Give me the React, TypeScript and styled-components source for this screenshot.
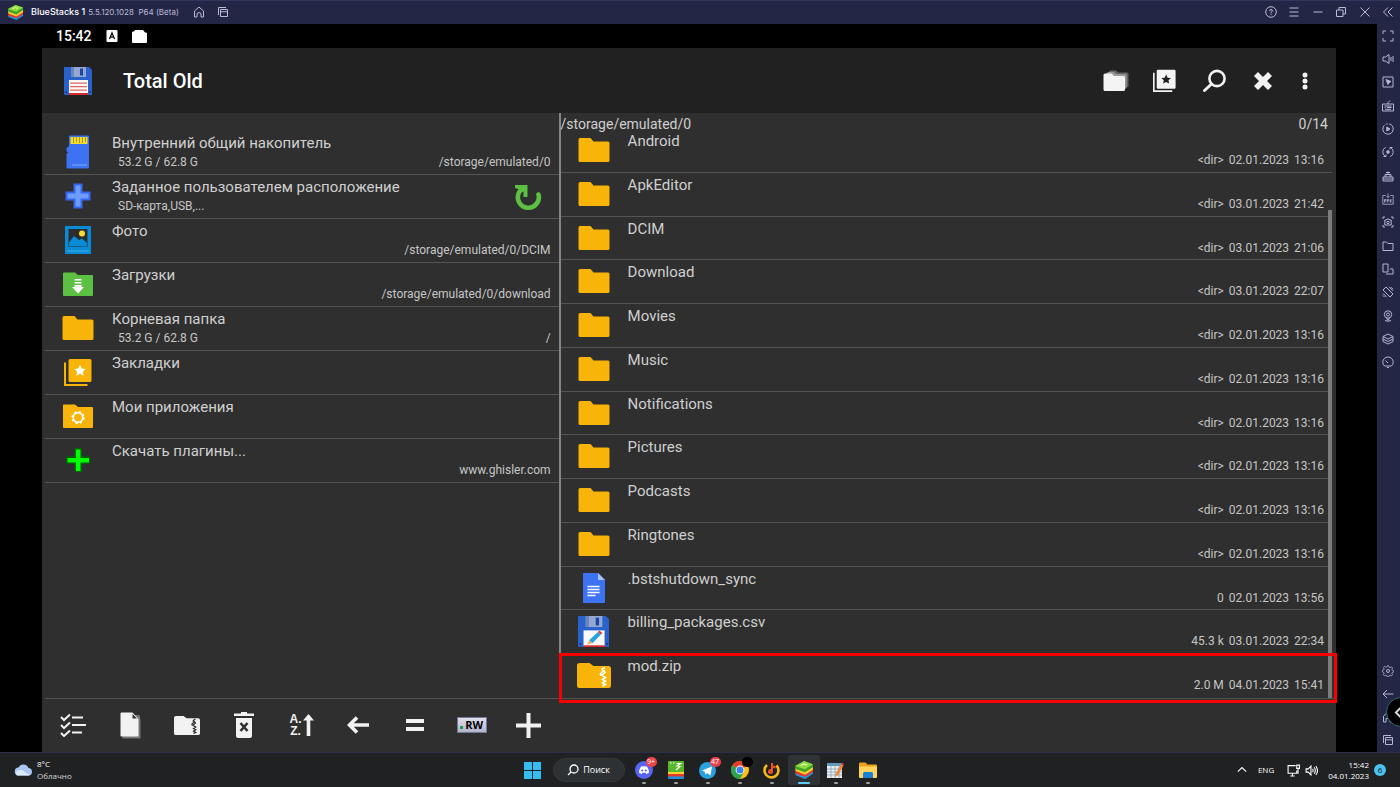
import React from "react";
import styled, { createGlobalStyle, css } from "styled-components";

const GlobalStyle = createGlobalStyle`
  *, *::before, *::after { box-sizing: border-box; }
  body { margin: 0; background: #000; overflow-x: hidden; font-family: Roboto, "Liberation Sans", sans-serif; }
  button { font: inherit; color: inherit; background: none; border: 0; padding: 0; margin: 0; cursor: pointer; }
  svg { display: block; flex: none; }
`;

/* ---------- shell ---------- */

const Page = styled.div`
  display: flex;
  flex-direction: column;
  min-height: 100vh;
`;

const TitleBar = styled.header`
  display: flex;
  align-items: center;
  height: 24px;
  padding: 0 0 1px 7px;
  background: #232645;
  border-top: 1px solid #32365a;
  color: #b9bbd6;
`;

const ProductName = styled.span`
  margin-left: 7px;
  font: 500 9px/16px Inter, sans-serif;
  color: #fff;
`;

const Version = styled.span`
  margin: 0 8px 0 3px;
  font: 400 8px/16px Inter, sans-serif;
`;

const TitleButton = styled.button`
  display: grid;
  place-items: center;
  width: 24px;
  height: 22px;
`;

const WindowButtons = styled.div`
  display: grid;
  grid-template-columns: repeat(6, 1fr);
  width: 141px;
  margin-left: auto;
  ${TitleButton} { width: auto; }
`;

const Workspace = styled.div`
  display: flex;
  flex: 1;
`;

const Device = styled.main`
  display: flex;
  flex-direction: column;
  flex: 1;
  min-width: 0;
  padding: 0 41px 0 42px;
  background: #000;
`;

const StatusBar = styled.div`
  display: flex;
  align-items: center;
  gap: 14px;
  height: 24px;
  padding-left: 14px;
  color: #fff;
  font-size: 14px;
  font-weight: 500;
`;

const Rail = styled.nav`
  position: relative;
  display: flex;
  flex-direction: column;
  justify-content: space-between;
  width: 23px;
  padding-right: 1px;
  overflow: hidden;
  background: #232645;
  color: #b4b6d2;
`;

const RailGroup = styled.div<{ $count: number; $height: number }>`
  display: grid;
  grid-template-rows: repeat(${p => p.$count}, 1fr);
  height: ${p => p.$height}px;
`;

const RailButton = styled.button`
  display: grid;
  place-items: center;
`;

const Flyout = styled.button`
  position: absolute;
  right: -16px;
  bottom: 25px;
  display: flex;
  align-items: center;
  width: 30px;
  height: 30px;
  padding-left: 7px;
  border: 1px solid #2d6a72;
  border-radius: 50%;
  background: #000;
  color: #ddd;
`;

/* ---------- file manager ---------- */

const AppHeader = styled.div`
  display: flex;
  align-items: center;
  height: 65px;
  padding: 0 13px 0 22px;
  background: #212121;
  color: #fff;
`;

const AppTitle = styled.h1`
  margin: 0 auto 0 31px;
  font-size: 20px;
  line-height: 24px;
  font-weight: 500;
`;

const HeaderButton = styled.button<{ $narrow?: boolean }>`
  display: grid;
  place-items: center;
  width: ${p => (p.$narrow ? 36 : 49)}px;
  height: 48px;
  color: #f2f2f2;
`;

const Panes = styled.div`
  display: grid;
  grid-template-columns: calc(40% - 1px) 1fr;
  flex: 1;
  background: #2f2f2f;
`;

const LeftPane = styled.section`
  padding: 18px 0 0 3px;
`;

const RightPane = styled.section`
  display: flex;
  flex-direction: column;
  border-left: 2px solid #858585;
`;

const PathBar = styled.div`
  display: flex;
  justify-content: space-between;
  height: 16px;
  padding-right: 8px;
  color: #d0d0d0;
  font-size: 14px;
  line-height: 22px;
`;

const PlaceList = styled.ul`
  margin: 0;
  padding: 0;
  list-style: none;
`;

const FileList = styled.ul`
  position: relative;
  display: grid;
  grid-auto-rows: 1fr;
  flex: 1;
  margin: 0;
  padding: 0 4px 0 0;
  list-style: none;
`;

const ListRow = styled.li<{ $marked?: boolean }>`
  display: flex;
  min-height: 43px;
  border-bottom: 1px solid #545454;
  ${PlaceList} & { height: 44px; }
  ${p => p.$marked && css`
    border-bottom: 0;
    &::after {
      content: "";
      position: absolute;
      z-index: 2;
      inset: auto -1px -5px -2px;
      height: 50px;
      border: 3px solid #f60000;
      pointer-events: none;
    }
  `}
`;

const RowButton = styled.button`
  display: grid;
  grid-template-columns: 67px auto 1fr;
  grid-template-rows: 20px 16px;
  flex: 1;
  align-content: start;
  padding: 2px 8px 0 0;
  text-align: left;
`;

const RowIcon = styled.span`
  display: grid;
  grid-row: 1 / 3;
  place-items: center;
  width: 66px;
  height: 38px;
`;

const RowName = styled.span`
  grid-column: 2 / 4;
  color: #d0d0d0;
  font-size: 15px;
  line-height: 20px;
  white-space: nowrap;
`;

const RowDetail = styled.span`
  grid-column: 2;
  padding-left: 6px;
  color: #c6c6c6;
  font-size: 12px;
  line-height: 18px;
`;

const RowMeta = styled.span`
  display: flex;
  grid-column: 3;
  gap: 5px;
  justify-content: flex-end;
  color: #c6c6c6;
  font-size: 12px;
  line-height: 18px;
`;

const ReloadButton = styled.button`
  align-self: center;
  margin-right: 17px;
`;

const ScrollThumb = styled.div`
  position: absolute;
  top: 81px;
  right: 4px;
  bottom: 0;
  width: 4px;
  background: #7c7c7c;
`;

const BottomBar = styled.div`
  padding-left: 3px;
  background: #2f2f2f;
`;

const Tools = styled.div`
  height: 54px;
  border-top: 1px solid #545454;
`;

const ToolGrid = styled.div`
  display: grid;
  grid-template-columns: repeat(9, 1fr);
  width: 512px;
  height: 52px;
`;

const ToolButton = styled.button`
  display: grid;
  place-items: center;
  color: #f2f2f2;
`;

/* ---------- desktop task bar ---------- */

const TaskBar = styled.footer`
  display: grid;
  grid-template-columns: 1fr auto 1fr;
  align-items: center;
  height: 35px;
  border-top: 1px solid #2d2f48;
  background: #1f2122;
  color: #fff;
  font: 500 8px/12px "Open Sans", "Noto Sans", sans-serif;
`;

const Weather = styled.button`
  display: flex;
  align-items: center;
  gap: 4px;
  justify-self: start;
  padding-left: 14px;
  text-align: left;
`;

const Muted = styled.span`
  color: #d8d8d8;
`;

const TaskGroup = styled.div`
  display: flex;
  align-items: center;
`;

const TaskButton = styled.button<{ $active?: boolean }>`
  position: relative;
  display: grid;
  place-items: center;
  width: 32px;
  height: 30px;
  border-radius: 3px;
  ${p => p.$active && css`background: #303335;`}
`;

const RunningMark = styled.i<{ $active?: boolean }>`
  position: absolute;
  bottom: 1px;
  width: ${p => (p.$active ? 12 : 4)}px;
  height: 2px;
  border-radius: 1px;
  background: ${p => (p.$active ? "#5ccaf5" : "#a0a0a0")};
`;

const Badge = styled.span<{ $dark?: boolean }>`
  position: absolute;
  top: 2px;
  right: 3px;
  min-width: 11px;
  height: 10px;
  padding: 0 1px;
  border-radius: 5px;
  background: ${p => (p.$dark ? "#000" : "#e8434a")};
  font-size: 7px;
  line-height: 10px;
  text-align: center;
`;

const SearchButton = styled.button`
  display: flex;
  align-items: center;
  justify-content: center;
  gap: 4px;
  width: 72px;
  height: 24px;
  margin: 0 3px 0 4px;
  border: 1px solid #34383a;
  border-radius: 12px;
  background: #2d3133;
  font-size: 9px;
  font-weight: 500;
`;

const Tray = styled.div`
  display: flex;
  align-items: center;
  justify-self: end;
  gap: 5px;
  padding-right: 14px;
`;

const TrayButton = styled.button`
  display: flex;
  align-items: center;
`;

const Language = styled(TrayButton)`
  margin: 0 8px 0 6px;
`;

const Clock = styled(TrayButton)`
  flex-direction: column;
  align-items: flex-end;
  margin-left: 5px;
  line-height: 11px;
`;

const Notices = styled(TrayButton)`
  justify-content: center;
  width: 12px;
  height: 12px;
  border-radius: 50%;
  background: #4cc2f0;
  color: #10222c;
`;

/* ---------- icons ---------- */

type LineProps = { size?: number; width?: number; children: React.ReactNode };

const Line = ({ size = 12, width = 1, children }: LineProps) => (
  <svg width={size} height={size} viewBox="0 0 12 12" fill="none" stroke="currentColor" strokeWidth={width} aria-hidden="true">
    {children}
  </svg>
);

const StacksLogo = ({ size = 17 }: { size?: number }) => (
  <svg width={size} height={size} viewBox="0 0 18 18" aria-hidden="true">
    <path d="M1 11.5 10.5 14.5 17 10v2.4L10 17 1.6 13.8z" fill="#1e9be8" />
    <path d="M1 9.500 10 12.800 17 8v2.800L10 15.200 1.600 12.400z" fill="#e8352b" />
    <path d="M1 7.200 10 10.500 17 6v2.700L10 13.200 1.500 10z" fill="#ffcf2e" />
    <path d="M1 5.400 9 1l8 2.800v2.400L10 11 1.300 8z" fill="#3fa52a" />
    <path d="M1 5.400 9 1l8 2.800L9.800 8.300z" fill="#8fdb3c" />
    <path d="M6 5l3-1.500 1.500 1L12 4" fill="none" stroke="#e9ffd0" strokeWidth="1" />
  </svg>
);

const CopiesIcon = () => (
  <Line>
    <path d="M1.500 9V1.500H9M3.500 3.500h7v7h-7zM3.500 5.800h7" />
  </Line>
);

const FloppyIcon = ({ size = 28, pencil }: { size?: number; pencil?: boolean }) => (
  <svg width={size} height={size} viewBox="0 0 28 28" aria-hidden="true">
    <path d="M0 0h25l3 3v25H1l-1-1z" fill="#2a62cc" />
    <path d="M7 0h15v10H7z" fill="#93a9d4" />
    <path d="M7 0h3v10H7z" fill="#6d86bd" />
    <path d="M16 1.500h3v7h-3z" fill="#1d479e" />
    <path d="M5 13h19v14H5z" fill="#fafafa" />
    {pencil ? (
      <g>
        <path d="M5 26.500h19V28H5z" fill="#d92b2b" />
        <path d="M10 22 18 14.500l2.500 2.500L13 24.500z" fill="#28a3e0" />
        <path d="m18 14.500 1.500-1.500 2.500 2.500-1.500 1.500z" fill="#d94436" />
        <path d="m10 22-1.500 4 4.500-1.500z" fill="#f0b25e" />
      </g>
    ) : (
      <g>
        <path d="M6 16.200h17M6 19.700h17M6 23.200h17" stroke="#e06666" strokeWidth="1.200" />
        <path d="M5 26h19v2H5z" fill="#d92b2b" />
      </g>
    )}
    <path d="M1.500 24.500h1.500V26H1.500zM25.500 24.500H27V26h-1.500z" fill="#12306f" />
  </svg>
);

const FolderIcon = () => (
  <svg width="32" height="26" viewBox="0 0 32 26" aria-hidden="true">
    <path d="M2 1h10.500l3 3.500H30a1.500 1.500 0 0 1 1.500 1.500v17.500A1.500 1.500 0 0 1 30 25H2A1.500 1.500 0 0 1 .5 23.500v-21A1.500 1.500 0 0 1 2 1z" fill="#f8b408" />
  </svg>
);

const ZipFolder = ({ size, color, zip }: { size: number; color: string; zip: string }) => (
  <svg width={size} height={Math.round(size * 0.8)} viewBox="0 0 34 27" aria-hidden="true">
    <path d="M2.500 1h10l4 3H31.500A2.500 2.500 0 0 1 34 6.500v17a2.500 2.500 0 0 1-2.500 2.500H2.500A2.500 2.500 0 0 1 0 23.500v-20A2.500 2.500 0 0 1 2.500 1z" fill={color} />
    <path d="M28 5.500q-3 .5-3 3M27 8.500 23.500 11.500q-.5 2 1.500 1.500L28 10.500zM25.500 14l3 1.500-3 2 3 1.500-3 2 3 1.500-3 1.500" fill="none" stroke={zip} strokeWidth="1.600" />
  </svg>
);

const SdIcon = () => (
  <svg width="26" height="34" viewBox="0 0 26 34" aria-hidden="true">
    <path d="M5 .5h18a1 1 0 0 1 1 1v31a1 1 0 0 1-1 1H2.500a1 1 0 0 1-1-1V19L3 17.500 1.500 16v-3L4 11V1.500a1 1 0 0 1 1-1z" fill="#3d72f2" />
    <path d="M5.500 2h17v7h-17z" fill="#f6dd2b" />
    <path d="M8.500 2v6M11.500 2v5M14.500 2v6M17.500 2v6M20.500 2v5" stroke="#8f8b34" strokeWidth=".8" />
    <path d="M7 30h15" stroke="#86a6f7" strokeWidth="1" />
  </svg>
);

const PlusBlue = () => (
  <svg width="26" height="26" viewBox="0 0 26 26" aria-hidden="true">
    <path d="M9.500 1.500h7v8h8v7h-8v8h-7v-8h-8v-7h8z" fill="#6f9bfa" stroke="#3668ee" strokeWidth="2" />
  </svg>
);

const PlusGreen = () => (
  <svg width="26" height="26" viewBox="0 0 26 26" aria-hidden="true">
    <path d="M9 1h8v8h8v8h-8v8H9v-8H1V9h8z" fill="#075b0b" />
    <path d="M11 2.500h4.500V11h8.500v4.500h-8.500V24H11v-8.500H2.500V11H11z" fill="#0f0" />
  </svg>
);

const PhotoIcon = () => (
  <svg width="28" height="30" viewBox="0 0 28 30" aria-hidden="true">
    <rect x="1" y="1" width="26" height="28" fill="#0a8bd8" />
    <path d="M4.500 4h19v17.500h-19z" fill="#2a2d30" />
    <path d="M5 17.500 10 11l5 4 3-1.500L23 18v3H5z" fill="#0a8bd8" />
    <circle cx="18" cy="8.500" r="3" fill="#f8dc35" />
    <path d="M3 26h22" stroke="#4fb3ec" strokeWidth=".8" />
  </svg>
);

const DownloadFolder = () => (
  <svg width="30" height="24" viewBox="0 0 30 24" aria-hidden="true">
    <path d="M1 .5h11l3 2.500h14a1 1 0 0 1 1 1v19a1 1 0 0 1-1 1H1a1 1 0 0 1-1-1v-21.500a1 1 0 0 1 1-1z" fill="#5cc043" />
    <path d="M11.500 7h7v1.500h-7zM11.500 10h7v1.500h-7zM11.500 13h7v2H21l-6 6.500L9 15h2.500z" fill="#fff" />
  </svg>
);

const BookmarksIcon = ({ size, color, star }: { size: number; color: string; star: string }) => (
  <svg width={size} height={size} viewBox="0 0 28 28" aria-hidden="true">
    <path d="M1 4.500V27h22.500" fill="none" stroke={color} strokeWidth="2" />
    <rect x="4.500" y="1" width="23" height="23" rx="1.500" fill={color} />
    <path d="m16 6.800 1.800 3.700 4 .5-2.900 2.800.7 4-3.600-2-3.600 2 .7-4-2.900-2.800 4-.5z" fill={star} />
  </svg>
);

const AppsFolder = () => (
  <svg width="30" height="24" viewBox="0 0 30 24" aria-hidden="true">
    <path d="M1 .5h11l3 2.500h14a1 1 0 0 1 1 1v19a1 1 0 0 1-1 1H1a1 1 0 0 1-1-1v-21.500a1 1 0 0 1 1-1z" fill="#f8b408" />
    <circle cx="15" cy="13.500" r="5.600" fill="none" stroke="#fff" strokeWidth="2" strokeDasharray="2.200 2.200" />
    <circle cx="15" cy="13.500" r="4.700" fill="none" stroke="#fff" strokeWidth="1.600" />
  </svg>
);

const DocIcon = () => (
  <svg width="24" height="32" viewBox="0 0 24 32" aria-hidden="true">
    <path d="M1 1h15l7 7v23H1z" fill="#3d73f3" />
    <path d="M16 1v7h7z" fill="#a9c2fb" />
    <path d="M5.500 14.500h12M5.500 17.500h12M5.500 20.500h12M5.500 23.500h8" stroke="#fff" strokeWidth="1.400" />
  </svg>
);

const ReloadIcon = () => (
  <svg width="28" height="28" viewBox="0 0 28 28" aria-hidden="true">
    <path d="M5 9.500A10.500 10.500 0 1 0 24.500 11.500" fill="none" stroke="#5cc043" strokeWidth="4.600" strokeLinecap="round" />
    <path d="M1 2h12.500v12H9.500V8.500L5.500 10.500 4 6 1 5z" fill="#5cc043" />
  </svg>
);

const FoldersIcon = () => (
  <svg width="26" height="22" viewBox="0 0 26 22" aria-hidden="true">
    <path d="M5 3 7 .5h6l2 2h9A1.500 1.500 0 0 1 25.500 4v12.500L22 18z" fill="#666" />
    <path d="M3 4 5 2h6l2 2h9a1.500 1.500 0 0 1 1.500 1.500V18L20 20z" fill="#999" />
    <path d="M2 3.500h6.500L11 6h9.500A1.500 1.500 0 0 1 22 7.500v12a1.500 1.500 0 0 1-1.500 1.500H2a1.500 1.500 0 0 1-1.500-1.500V5A1.500 1.500 0 0 1 2 3.500z" fill="#f4f4f4" />
  </svg>
);

const FindIcon = () => (
  <svg width="24" height="24" viewBox="0 0 24 24" fill="none" stroke="currentColor" aria-hidden="true">
    <circle cx="15" cy="9.500" r="7.600" strokeWidth="2.600" />
    <path d="M9.500 15 2.500 21.500" strokeWidth="3" strokeLinecap="round" />
  </svg>
);

const CloseIcon = () => (
  <svg width="20" height="20" viewBox="0 0 20 20" aria-hidden="true">
    <path d="m5 1 5 5 5-5 4 4-5 5 5 5-4 4-5-5-5 5-4-4 5-5-5-5z" fill="currentColor" />
  </svg>
);

const DotsIcon = () => (
  <svg width="6" height="18" viewBox="0 0 6 18" fill="currentColor" aria-hidden="true">
    <circle cx="3" cy="3" r="2.500" /><circle cx="3" cy="9" r="2.500" /><circle cx="3" cy="15" r="2.500" />
  </svg>
);

const ChecklistIcon = () => (
  <svg width="26" height="24" viewBox="0 0 26 24" fill="none" stroke="currentColor" strokeWidth="2" aria-hidden="true">
    <path d="m1 4 3 3 6-5.500M1 12l3 3 6-5.500M1 20l3 3 6-5.500M12 4.500h11M12 12h14M12 19.500h10" />
  </svg>
);

const NewFileIcon = () => (
  <svg width="21" height="27" viewBox="0 0 21 27" aria-hidden="true">
    <path d="M2.500 3h17l1 5v18.500h-18z" fill="#777" />
    <path d="M1.500.5h11L18.500 7v16.500a1 1 0 0 1-1 1h-16a1 1 0 0 1-1-1v-22a1 1 0 0 1 1-1z" fill="#f2f2f2" />
    <path d="M12.500 2v4.500H17z" fill="#333" />
  </svg>
);

const TrashIcon = () => (
  <svg width="20" height="26" viewBox="0 0 20 26" aria-hidden="true">
    <path d="M7 0h6v1.500h7V4H0V1.500h7zM2 6h16v18a2 2 0 0 1-2 2H4a2 2 0 0 1-2-2z" fill="currentColor" />
    <path d="m6.500 11 7 8M13.500 11l-7 8" stroke="#2f2f2f" strokeWidth="2.600" />
  </svg>
);

const SortWrap = styled.span`
  display: grid;
  grid-template-columns: 15px 11px;
  align-items: center;
`;

const SortLetters = styled.span`
  display: grid;
  font: 700 12px/12px "Liberation Sans", sans-serif;
`;

const SortIcon = () => (
  <SortWrap>
    <SortLetters><span>A.</span><span>Z.</span></SortLetters>
    <svg width="11" height="22" viewBox="0 0 11 22" aria-hidden="true">
      <path d="M5.500 0 11 6.500H7.300V22H3.700V6.500H0z" fill="currentColor" />
    </svg>
  </SortWrap>
);

const RwTag = styled.span`
  display: flex;
  align-items: baseline;
  justify-content: center;
  gap: 2px;
  width: 30px;
  height: 16px;
  border: 1px solid #777894;
  background: linear-gradient(#dfdfed, #b4b4cc);
  color: #000;
  font: 700 11px/14px "Open Sans", sans-serif;
`;

const GreenDot = styled.i`
  width: 3px;
  height: 3px;
  background: #12a34a;
`;

/* task bar artwork */

const WindowsLogo = () => (
  <svg width="17" height="17" viewBox="0 0 17 17" fill="#35bdf2" aria-hidden="true">
    <path d="M0 0h8v8H0zM9 0h8v8H9zM0 9h8v8H0zM9 9h8v8H9z" />
  </svg>
);

const DiscordIcon = () => (
  <svg width="18" height="18" viewBox="0 0 18 18" aria-hidden="true">
    <circle cx="9" cy="9" r="9" fill="#5865f2" />
    <path d="M6 5.500Q9 4.800 12 5.500q2 3 2 6.200-1.300 1-2.700 1.200l-.6-1.200H7.300l-.6 1.200Q5.300 12.700 4 11.700 4 8.500 6 5.500z" fill="#fff" />
    <circle cx="7.200" cy="9.500" r="1.100" fill="#5865f2" /><circle cx="10.800" cy="9.500" r="1.100" fill="#5865f2" />
  </svg>
);

const StacksTile = () => (
  <svg width="16" height="18" viewBox="0 0 16 18" aria-hidden="true">
    <rect y="12" width="16" height="6" rx="1" fill="#1e8fe0" />
    <path d="M0 10h16v5.500H0z" fill="#e23b2c" />
    <path d="M0 9h16v4H0z" fill="#ffd02b" />
    <rect width="16" height="11" rx="1" fill="#58b82c" />
    <path d="M2 2h1.500M5 2h1.500M8.500 2.500h4L9 5l3 .5L8 9" fill="none" stroke="#fff" strokeWidth="1.200" />
  </svg>
);

const TelegramIcon = () => (
  <svg width="17" height="17" viewBox="0 0 17 17" aria-hidden="true">
    <circle cx="8.500" cy="8.500" r="8.500" fill="#2aa1de" />
    <path d="m3 8.500 10-4-1.500 9L8 11l-1.500 1.800L6 10z" fill="#fff" />
  </svg>
);

const ChromeIcon = () => (
  <svg width="18" height="18" viewBox="0 0 18 18" aria-hidden="true">
    <circle cx="9" cy="9" r="9" fill="#fbc116" />
    <path d="M9 9 1.200 4.500A9 9 0 0 1 16.800 4.500z" fill="#e33b2e" />
    <path d="M9 9 1.200 4.500A9 9 0 0 0 9 18l3.500-6.500z" fill="#2ba24c" />
    <circle cx="9" cy="9" r="4.400" fill="#fff" /><circle cx="9" cy="9" r="3.500" fill="#3b82ee" />
  </svg>
);

const MusicIcon = () => (
  <svg width="17" height="17" viewBox="0 0 17 17" aria-hidden="true">
    <path d="M4 3a7 7 0 1 0 9.500.5" fill="none" stroke="#f9b916" strokeWidth="2.600" />
    <path d="M9 1v8" stroke="#f0502f" strokeWidth="2" />
    <path d="M9 1q0 3 3.500 3v2.500Q9.500 6.500 9 4z" fill="#f0502f" />
    <circle cx="7.500" cy="9.500" r="2.500" fill="#f0502f" />
  </svg>
);

const NotesIcon = () => (
  <svg width="17" height="17" viewBox="0 0 17 17" aria-hidden="true">
    <rect x="0" y="1" width="15" height="15" fill="#e9eef3" />
    <path d="M0 1h15v3H0z" fill="#5f99bd" />
    <path d="M0 7h15M0 10h15M0 13h15M4 4v12M8 4v12M12 4v12" stroke="#8aa3b5" strokeWidth=".8" />
    <path d="m8 15 1-4 5-9 2.500 1.500-5 9z" fill="#ef8638" /><path d="m14 2 1-1.500L17 2l-.5 1.500z" fill="#c2363a" />
  </svg>
);

const ExplorerIcon = () => (
  <svg width="18" height="16" viewBox="0 0 18 16" aria-hidden="true">
    <path d="M0 1.500A1 1 0 0 1 1 .5h5.500l2 2H17a1 1 0 0 1 1 1V8H0z" fill="#e8a51c" />
    <path d="M0 4.500h18V15a1 1 0 0 1-1 1H1a1 1 0 0 1-1-1z" fill="#ffd35c" />
    <path d="M4 16v-4.500a1.500 1.500 0 0 1 1.500-1.500h7a1.500 1.500 0 0 1 1.500 1.500V16z" fill="#1c80d4" />
  </svg>
);

const CloudIcon = () => (
  <svg width="19" height="14" viewBox="0 0 19 14" aria-hidden="true">
    <path d="M5 12.500a4 4 0 0 1-.5-8A5.500 5.500 0 0 1 14.500 5a3.800 3.800 0 0 1 .5 7.500z" fill="#a9c7f2" />
    <path d="M3 12.500a3 3 0 0 1 2-5.200q4-.8 6 2 2.500 2 5.500 2l-1.500 1.200z" fill="#dce9fb" />
  </svg>
);

/* ---------- data ---------- */

const windowControls: [string, React.ReactNode][] = [
  ["Help", <Line><circle cx="6" cy="6" r="5.300" /><path d="M4.600 5Q4.600 3.500 6 3.500T7.400 5Q7.400 5.700 6 6.300V7.300M6 8.200v1" /></Line>],
  ["Menu", <Line><path d="M1.500 2h9M1.500 6h9M1.500 10h9" /></Line>],
  ["Minimize", <Line><path d="M1.500 6h9" /></Line>],
  ["Restore", <Line><path d="M1.500 4h6.500v6.500H1.500zM4 4V1.500h6.500V8H8" /></Line>],
  ["Close", <Line><path d="m1.500 1.500 9 9M10.500 1.500l-9 9" /></Line>],
  ["Collapse sidebar", <Line><path d="M6 1.500 1.500 6 6 10.500M10.500 1.500 6 6l4.500 4.500" /></Line>],
];

const railTop: [string, React.ReactNode][] = [
  ["Full screen", <Line><path d="M1 4V1h3M8 1h3v3M11 8v3H8M4 11H1V8" /></Line>],
  ["Volume", <Line><path d="M1 4h2.500L7 1.500v9L3.500 8H1zM9 4v4M11 3v6" /></Line>],
  ["Lock cursor", <Line><path d="M1 1h10v10H1z" /><path d="m4 3.500 5 2-2 1-1 2z" fill="currentColor" /></Line>],
  ["Game controls", <Line><path d="M.5 4h11v7H.5zM6 4V2.500L8 .5M2.500 6h7M2.500 7.500h1M5 7.500h4.500M3 9.300h6" /></Line>],
  ["Play macro", <Line><circle cx="6" cy="6" r="5.200" strokeDasharray="20 1.500 2 1.500" /><path d="m4.800 4 3.200 2-3.200 2z" fill="currentColor" /></Line>],
  ["Rotate sync", <Line><path d="M3.800 1.300A5.200 5.200 0 0 0 3 10.200M8.200 10.700A5.200 5.200 0 0 0 9 1.800M1.500 10.500H4V8.500M10.500 1.500H8v2" /><circle cx="6" cy="6" r="1.300" fill="currentColor" /></Line>],
  ["Multi-instance", <Line><path d="M1 7h10v4H1zM3 7V4.500h6V7M6 4.500V1.500M1 9h10M4 2.500h4M4 6h1M7 6h1" /></Line>],
  ["Install APK", <Line><path d="M3.500 2.500H.8v8.700h10.400V2.500H8.500M6 .5v4M4.500 3 6 4.500 7.500 3M2.500 9.500V6.500h1.500V8H2.500M5.300 9.500v-3h1.500V8H5.300M8.300 6.300v3.200M10 6.300 8.500 8 10 9.500" strokeWidth=".8" /></Line>],
  ["Screenshot", <Line><path d="M1 3V1h2M9 1h2v2M11 9v2H9M3 11H1V9M2.800 4h1.700L5 3h2l.5 1h1.700v5H2.800z" /><circle cx="6" cy="6.500" r="1.200" /></Line>],
  ["Media folder", <Line><path d="M1 2h3.500L6 3.500h5v7H1z" /></Line>],
  ["Rotate", <Line><path d="M1 1h5v8H1zM8 6h3v5H4" /></Line>],
  ["Shake", <Line><path d="M4 1 11 8 8 11 1 4zM7 .8l4 4M1 7.500l3.500 3.500M9 1.200l2 2M1 9.500 2.500 11" /></Line>],
  ["Location", <Line><circle cx="6" cy="4.500" r="3.700" /><circle cx="6" cy="4.500" r="1.500" /><path d="M4.500 8 6 10.500 7.500 8M3 10.500q3 1.500 6 0" /></Line>],
  ["Layers", <Line><path d="m1 3.500 5-2.500 5 2.500L6 6zM1 3.500v5L6 11l5-2.500v-5M1 6l5 2.500L11 6" /></Line>],
  ["Performance", <Line><path d="M2.500 10A5.200 5.200 0 1 1 9.500 10zM6 7 3.500 4.500M5 11.500h2" /></Line>],
];

const railBottom: [string, React.ReactNode][] = [
  ["Settings", <Line><circle cx="6" cy="6" r="1.500" /><path d="M5.200.8h1.600l.4 1.500 1 .4 1.400-.7 1 1.100-.7 1.400.4 1 1.400.4v1.200l-1.500.4-.4 1 .8 1.400-1.100 1-1.400-.8-1 .5-.4 1.300H5.200l-.4-1.400-1-.4-1.400.7-1-1.100.7-1.400-.4-.9L.4 6.900V5.300l1.400-.5.4-.9-.8-1.400 1.100-1 1.400.7.9-.4z" strokeWidth=".8" /></Line>],
  ["Back", <Line><path d="M11.500 6H1M5 2 1 6l4 4" /></Line>],
  ["Home", <Line><path d="M1.500 11V5L6 1l4.500 4v6H8V7.500H4V11z" /></Line>],
  ["Recent apps", <CopiesIcon />],
];

type Place = { name: string; detail?: string; path?: string; icon: React.ReactNode; reload?: boolean };

const places: Place[] = [
  { name: "Внутренний общий накопитель", detail: "53.2 G / 62.8 G", path: "/storage/emulated/0", icon: <SdIcon /> },
  { name: "Заданное пользователем расположение", detail: "SD-карта,USB,...", icon: <PlusBlue />, reload: true },
  { name: "Фото", path: "/storage/emulated/0/DCIM", icon: <PhotoIcon /> },
  { name: "Загрузки", path: "/storage/emulated/0/download", icon: <DownloadFolder /> },
  { name: "Корневая папка", detail: "53.2 G / 62.8 G", path: "/", icon: <FolderIcon /> },
  { name: "Закладки", icon: <BookmarksIcon size={28} color="#f8b408" star="#fff" /> },
  { name: "Мои приложения", icon: <AppsFolder /> },
  { name: "Скачать плагины...", path: "www.ghisler.com", icon: <PlusGreen /> },
];

type FileEntry = { name: string; size: string; date: string; time: string; icon: React.ReactNode; marked?: boolean };

const dir = (name: string, date = "02.01.2023", time = "13:16"): FileEntry => ({
  name, size: "<dir>", date, time, icon: <FolderIcon />,
});

const files: FileEntry[] = [
  dir("Android"),
  dir("ApkEditor", "03.01.2023", "21:42"),
  dir("DCIM", "03.01.2023", "21:06"),
  dir("Download", "03.01.2023", "22:07"),
  dir("Movies"),
  dir("Music"),
  dir("Notifications"),
  dir("Pictures"),
  dir("Podcasts"),
  dir("Ringtones"),
  { name: ".bstshutdown_sync", size: "0", date: "02.01.2023", time: "13:56", icon: <DocIcon /> },
  { name: "billing_packages.csv", size: "45.3 k", date: "03.01.2023", time: "22:34", icon: <FloppyIcon size={31} pencil /> },
  { name: "mod.zip", size: "2.0 M", date: "04.01.2023", time: "15:41", icon: <ZipFolder size={34} color="#f8b408" zip="#fff" />, marked: true },
];

const tools: [string, React.ReactNode][] = [
  ["Select", <ChecklistIcon />],
  ["New file", <NewFileIcon />],
  ["Pack", <ZipFolder size={26} color="#f2f2f2" zip="#2f2f2f" />],
  ["Delete", <TrashIcon />],
  ["Sort", <SortIcon />],
  ["Back", <svg width="22" height="18" viewBox="0 0 22 18" fill="none" stroke="currentColor" strokeWidth="3.600" aria-hidden="true"><path d="M22 9H3M10 1.500 2.500 9l7.500 7.500" /></svg>],
  ["Same folder", <svg width="18" height="12" viewBox="0 0 18 12" fill="currentColor" aria-hidden="true"><path d="M0 0h18v4H0zM0 8h18v4H0z" /></svg>],
  ["Read and write", <RwTag><GreenDot />RW</RwTag>],
  ["Add button", <svg width="25" height="25" viewBox="0 0 25 25" fill="currentColor" aria-hidden="true"><path d="M10.500 0h4v10.500H25v4H14.500V25h-4V14.500H0v-4h10.500z" /></svg>],
];

type Task = { label: string; icon: React.ReactNode; badge?: string; dark?: boolean; active?: boolean };

const tasks: Task[] = [
  { label: "Discord", icon: <DiscordIcon />, badge: "9+" },
  { label: "BlueStacks Manager", icon: <StacksTile /> },
  { label: "Telegram", icon: <TelegramIcon />, badge: "47" },
  { label: "Chrome", icon: <ChromeIcon />, badge: "", dark: true },
  { label: "Music", icon: <MusicIcon /> },
  { label: "BlueStacks", icon: <StacksLogo size={20} />, active: true },
  { label: "Notes", icon: <NotesIcon /> },
  { label: "Explorer", icon: <ExplorerIcon /> },
];

/* ---------- page ---------- */

export default function App() {
  return (
    <Page>
      <GlobalStyle />
      <TitleBar>
        <StacksLogo />
        <ProductName>BlueStacks 1</ProductName>
        <Version>5.5.120.1028&nbsp; P64 (Beta)</Version>
        <TitleButton aria-label="Home">
          <Line><path d="M1.500 11V5L6 1l4.500 4v6H8V7.500Q6 5.500 4 7.500V11z" /></Line>
        </TitleButton>
        <TitleButton aria-label="Recent apps"><CopiesIcon /></TitleButton>
        <WindowButtons>
          {windowControls.map(([label, icon]) => <TitleButton key={label} aria-label={label}>{icon}</TitleButton>)}
        </WindowButtons>
      </TitleBar>

      <Workspace>
        <Device>
          <StatusBar>
            <span>15:42</span>
            <svg width="12" height="12" viewBox="0 0 12 12" aria-hidden="true">
              <rect x=".5" width="11" height="12" rx="1" fill="#fff" />
              <path d="M3.500 9 6 3l2.500 6M4.500 7.200h3" fill="none" stroke="#111" strokeWidth="1.300" />
            </svg>
            <svg width="15" height="13" viewBox="0 0 15 13" aria-hidden="true">
              <path d="M2 1.500 3 0h8l2 2.500h1a1 1 0 0 1 1 1V12a1 1 0 0 1-1 1H1a1 1 0 0 1-1-1V2.500a1 1 0 0 1 1-1z" fill="#fff" />
            </svg>
          </StatusBar>

          <AppHeader>
            <FloppyIcon />
            <AppTitle>Total Old</AppTitle>
            <HeaderButton aria-label="Open folders"><FoldersIcon /></HeaderButton>
            <HeaderButton aria-label="Bookmarks"><BookmarksIcon size={23} color="#f4f4f4" star="#212121" /></HeaderButton>
            <HeaderButton aria-label="Find"><FindIcon /></HeaderButton>
            <HeaderButton aria-label="Close"><CloseIcon /></HeaderButton>
            <HeaderButton aria-label="More" $narrow><DotsIcon /></HeaderButton>
          </AppHeader>

          <Panes>
            <LeftPane>
              <PlaceList>
                {places.map(p => (
                  <ListRow key={p.name}>
                    <RowButton>
                      <RowIcon>{p.icon}</RowIcon>
                      <RowName>{p.name}</RowName>
                      {p.detail && <RowDetail>{p.detail}</RowDetail>}
                      {p.path && <RowMeta>{p.path}</RowMeta>}
                    </RowButton>
                    {p.reload && <ReloadButton aria-label="Reload"><ReloadIcon /></ReloadButton>}
                  </ListRow>
                ))}
              </PlaceList>
            </LeftPane>

            <RightPane>
              <PathBar>
                <span>/storage/emulated/0</span>
                <span>0/14</span>
              </PathBar>
              <FileList>
                {files.map(f => (
                  <ListRow key={f.name} $marked={f.marked}>
                    <RowButton>
                      <RowIcon>{f.icon}</RowIcon>
                      <RowName>{f.name}</RowName>
                      <RowMeta>
                        <span>{f.size}</span>
                        <span>{f.date}</span>
                        <span>{f.time}</span>
                      </RowMeta>
                    </RowButton>
                  </ListRow>
                ))}
                <ScrollThumb as="li" aria-hidden="true" />
              </FileList>
            </RightPane>
          </Panes>

          <BottomBar>
            <Tools>
              <ToolGrid>
                {tools.map(([label, icon]) => <ToolButton key={label} aria-label={label}>{icon}</ToolButton>)}
              </ToolGrid>
            </Tools>
          </BottomBar>
        </Device>

        <Rail>
          <RailGroup $count={15} $height={350}>
            {railTop.map(([label, icon]) => <RailButton key={label} aria-label={label}>{icon}</RailButton>)}
          </RailGroup>
          <RailGroup $count={4} $height={93}>
            {railBottom.map(([label, icon]) => <RailButton key={label} aria-label={label}>{icon}</RailButton>)}
          </RailGroup>
          <Flyout aria-label="Show panel"><Line size={11} width={2}><path d="M7 1 2 6l5 5" /></Line></Flyout>
        </Rail>
      </Workspace>

      <TaskBar>
        <Weather>
          <CloudIcon />
          <span>8°C<br /><Muted>Облачно</Muted></span>
        </Weather>
        <TaskGroup>
          <TaskButton aria-label="Start"><WindowsLogo /></TaskButton>
          <SearchButton>
            <Line size={12} width={1.3}><circle cx="7" cy="5" r="4" /><path d="M4 8 1 11" /></Line>
            Поиск
          </SearchButton>
          {tasks.map(t => (
            <TaskButton key={t.label} aria-label={t.label} $active={t.active}>
              {t.icon}
              {t.badge !== undefined && <Badge $dark={t.dark}>{t.badge}</Badge>}
              <RunningMark $active={t.active} />
            </TaskButton>
          ))}
        </TaskGroup>
        <Tray>
          <TrayButton aria-label="Hidden icons"><Line size={10} width={1.3}><path d="m1 8 5-5 5 5" /></Line></TrayButton>
          <Language>ENG</Language>
          <TrayButton aria-label="Network">
            <Line size={13}><path d="M8 1.500H1v7h8V6M3 11h4M5 8.500V11M9 1h2.500v3H9zM10.200 4v5" /></Line>
          </TrayButton>
          <TrayButton aria-label="Volume">
            <Line size={13}><path d="M1 4.500h2L5.500 2v8L3 7.500H1zM7 4.500q1 1.500 0 3M8.500 3q2 3 0 6M10 1.800q3 4.200 0 8.400" /></Line>
          </TrayButton>
          <Clock><span>15:42</span><span>04.01.2023</span></Clock>
          <Notices>6</Notices>
        </Tray>
      </TaskBar>
    </Page>
  );
}
